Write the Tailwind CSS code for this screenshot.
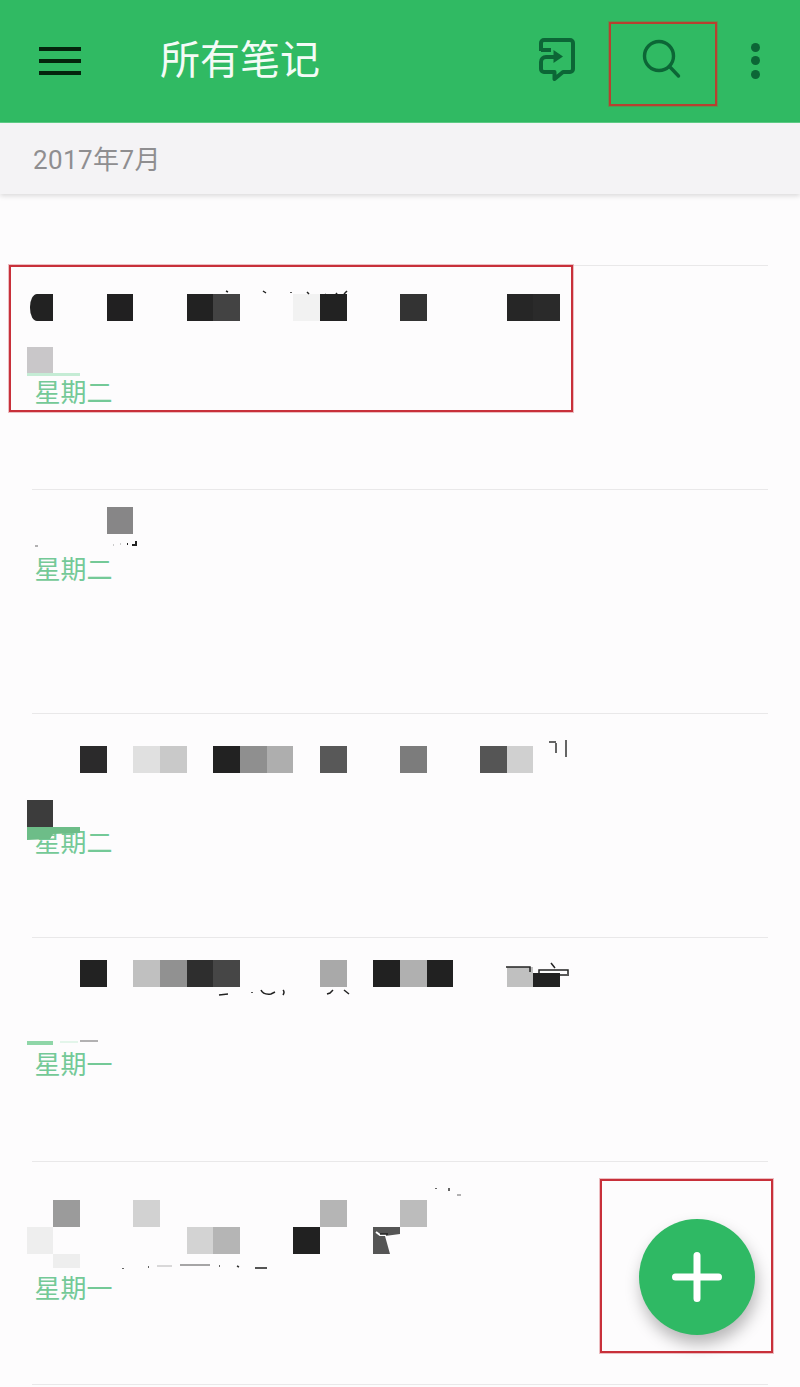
<!DOCTYPE html>
<html lang="zh-CN">
<head>
  <meta charset="UTF-8">
  <meta name="viewport" content="width=device-width, initial-scale=1.0">
  <title>所有笔记</title>
  <script src="https://cdn.jsdelivr.net/npm/@tailwindcss/browser@4"></script>
</head>
<body class="bg-[#fdfcfd] font-['Roboto','Noto_Sans_CJK_SC',sans-serif]">
  <div class="relative w-[800px] h-[1387px] overflow-hidden">

    <!-- Toolbar -->
    <header class="flex items-center h-[123px] bg-[#30ba63] border-b border-[#5fcf88]">
      <div class="flex flex-col gap-[8px] ml-[39px] w-[42px]">
        <span class="h-[4px] bg-[#04250d]"></span>
        <span class="h-[4px] bg-[#04250d]"></span>
        <span class="h-[4px] bg-[#04250d]"></span>
      </div>
      <h1 class="ml-[79px] mt-[-8px] text-[40px] leading-none text-[#f4fbf6] font-normal font-['Noto_Sans_CJK_SC',sans-serif]">所有笔记</h1>
      <svg class="ml-[219px] mt-[-4px] w-[36px] h-[43px]" viewBox="0 0 36 43" fill="none" stroke="#0c6636" stroke-width="4">
        <path d="M2 13V5a3 3 0 0 1 3-3h26a3 3 0 0 1 3 3v26a3 3 0 0 1-3 3h-7l-8.500 7v-7H5a3 3 0 0 1-3-3v-7a5 5 0 0 1 5-5h8" stroke-linejoin="round"/>
        <path d="M2 12h10"/>
        <path d="M14.500 12l9.500 6.500-9.500 6.500z" fill="#0c6636" stroke="none"/>
      </svg>
      <svg class="ml-[67px] mt-[-4px] w-[40px] h-[40px]" viewBox="0 0 40 40" fill="none" stroke="#0c6636" stroke-width="3.400" stroke-linecap="round">
        <circle cx="17" cy="17" r="14.500"/>
        <path d="M27.500 27.500l9 9.500"/>
      </svg>
      <div class="flex flex-col gap-[4.500px] ml-[69px] mt-[-1px]">
        <span class="w-[9px] h-[9px] rounded-full bg-[#0c6636]"></span>
        <span class="w-[9px] h-[9px] rounded-full bg-[#0c6636]"></span>
        <span class="w-[9px] h-[9px] rounded-full bg-[#0c6636]"></span>
      </div>
    </header>

    <!-- Month header -->
    <div class="flex items-center h-[71px] pl-[33px] pt-[3px] bg-[#f4f3f5] text-[26px] tracking-[0.4px] text-[#8f8e90] shadow-[0_2px_5px_rgba(0,0,0,0.14)]">2017年7月</div>

    <!-- Notes -->
    <ul class="mt-[71px] mx-[32px]">
      <li class="relative h-[224px] border-t border-[#e9e8e9] pt-[28px]">
        <div class="grid grid-cols-[repeat(21,26.667px)] auto-rows-[27px] gap-y-[26px] -ml-[5.200px]">
          <span class="row-start-1 col-start-1 ml-[3px] bg-[#222] rounded-l-[7px_13px]"></span>
          <span class="row-start-1 col-start-4 bg-[#212021]"></span>
          <span class="row-start-1 col-start-7 bg-[#222]"></span>
          <span class="row-start-1 col-start-8 bg-[#434343]"></span>
          <span class="row-start-1 col-start-11 bg-[#f2f2f2]"></span>
          <span class="row-start-1 col-start-12 bg-[#222]"></span>
          <span class="row-start-1 col-start-15 bg-[#333]"></span>
          <span class="row-start-1 col-start-19 bg-[#262626]"></span>
          <span class="row-start-1 col-start-20 bg-[#2a2a2a]"></span>
          <span class="row-start-2 col-start-1 bg-[#c9c7c9]"></span>
        </div>
        <p class="mt-[6px] ml-[2.500px] text-[26px] leading-[26px] text-[#74c997]">星期二</p>
        <svg class="absolute left-[-32px] top-[-1px] w-[800px] h-[224px]" viewBox="0 0 800 224" fill="none" stroke="#222" stroke-width="1.500">
          <path d="M226 26l2 1M263 26l3 2M291 27v1M307 27l2 2M325 29l3 3M336 28l3 4M347 26l-3 3"/>
          <path d="M27 108h26v3H27zM53 108h27v3H53z" fill="#c5ecd5" stroke="none"/>
        </svg>
      </li>

      <li class="relative h-[224px] border-t border-[#e9e8e9] pt-[17px]">
        <div class="grid grid-cols-[repeat(21,26.667px)] auto-rows-[27px] -ml-[5.200px]">
          <span class="col-start-4 bg-[#878687]"></span>
        </div>
        <p class="mt-[23px] ml-[2.500px] text-[26px] leading-[26px] text-[#74c997]">星期二</p>
        <svg class="absolute left-[-32px] top-[-1px] w-[800px] h-[224px]" viewBox="0 0 800 224" fill="none" stroke="#222" stroke-width="1.500">
          <path d="M35 57h3" stroke="#999"/>
          <path d="M113 56h1M120 55h1" stroke="#bbb"/>
          <path d="M127 55h1M136 52v4h-4" stroke-width="2"/>
        </svg>
      </li>

      <li class="relative h-[224px] border-t border-[#e9e8e9] pt-[32px]">
        <div class="grid grid-cols-[repeat(21,26.667px)] auto-rows-[27px] gap-y-[27px] -ml-[5.200px]">
          <span class="row-start-1 col-start-3 bg-[#2b2a2b]"></span>
          <span class="row-start-1 col-start-5 bg-[#e0e0e0]"></span>
          <span class="row-start-1 col-start-6 bg-[#c9c9c9]"></span>
          <span class="row-start-1 col-start-8 bg-[#222]"></span>
          <span class="row-start-1 col-start-9 bg-[#8f8f8f]"></span>
          <span class="row-start-1 col-start-10 bg-[#aeaeae]"></span>
          <span class="row-start-1 col-start-12 bg-[#585858]"></span>
          <span class="row-start-1 col-start-15 bg-[#7c7c7c]"></span>
          <span class="row-start-1 col-start-18 bg-[#555]"></span>
          <span class="row-start-1 col-start-19 bg-[#d0d0d0]"></span>
          <span class="row-start-2 col-start-1 bg-[#3c3c3c]"></span>
        </div>
        <p class="mt-[3px] ml-[2.500px] text-[26px] leading-[26px] text-[#74c997]">星期二</p>
        <svg class="absolute left-[-32px] top-[-1px] w-[800px] h-[224px]" viewBox="0 0 800 224" fill="none" stroke="#333" stroke-width="1.500">
          <path d="M549 29h7M556 30v10M566 27v17"/>
          <path d="M27 114h53v6l-27 1-3 5-23 1z" fill="#6dbd88" stroke="none"/>
        </svg>
      </li>

      <li class="relative h-[224px] border-t border-[#e9e8e9] pt-[22px]">
        <div class="grid grid-cols-[repeat(21,26.667px)] auto-rows-[27px] -ml-[5.200px]">
          <span class="col-start-3 bg-[#222]"></span>
          <span class="col-start-5 bg-[#c0c0c0]"></span>
          <span class="col-start-6 bg-[#919191]"></span>
          <span class="col-start-7 bg-[#2e2e2e]"></span>
          <span class="col-start-8 bg-[#464646]"></span>
          <span class="col-start-12 bg-[#a9a9a9]"></span>
          <span class="col-start-14 bg-[#212121]"></span>
          <span class="col-start-15 bg-[#b0b0b0]"></span>
          <span class="col-start-16 bg-[#212121]"></span>
          <span class="col-start-19 mt-[7px] bg-[#c0c0c0]"></span>
          <span class="col-start-20 mt-[13px] bg-[#222]"></span>
        </div>
        <p class="mt-[65px] ml-[2.500px] text-[26px] leading-[26px] text-[#74c997]">星期一</p>
        <svg class="absolute left-[-32px] top-[-1px] w-[800px] h-[224px]" viewBox="0 0 800 224" fill="none" stroke="#222" stroke-width="1.500">
          <path d="M219 58l9-1M252 55v1M261 53q2 5 10 4l4-2M283 53q2 2 0 5M327 57l3-1 3-3M344 53l5 4"/>
          <path d="M506 30h24v5M539 39v-6h29v6M540 38h27M551 26l4 5"/>
          <path d="M27 104h26v4H27z" fill="#8fd6a8" stroke="none"/>
          <path d="M60 104h18v2H60z" fill="#e3f5ea" stroke="none"/>
          <path d="M80 104h18" stroke="#999"/>
        </svg>
      </li>

      <li class="relative h-[224px] border-t border-[#e9e8e9] border-b pt-[38px]">
        <div class="grid grid-cols-[repeat(21,26.667px)] grid-rows-[27px_27px_14px] -ml-[5.200px]">
          <span class="row-start-1 col-start-2 bg-[#9b9b9b]"></span>
          <span class="row-start-1 col-start-5 bg-[#d2d2d2]"></span>
          <span class="row-start-1 col-start-12 bg-[#b5b5b5]"></span>
          <span class="row-start-1 col-start-15 bg-[#bcbcbc]"></span>
          <span class="row-start-2 col-start-1 bg-[#eeeeee]"></span>
          <span class="row-start-2 col-start-7 bg-[#d3d3d3]"></span>
          <span class="row-start-2 col-start-8 bg-[#b5b5b5]"></span>
          <span class="row-start-2 col-start-11 bg-[#212121]"></span>
          <span class="row-start-3 col-start-2 bg-[#eeeeee]"></span>
        </div>
        <p class="mt-[8px] ml-[2.500px] text-[26px] leading-[26px] text-[#74c997]">星期一</p>
        <svg class="absolute left-[-32px] top-[-1px] w-[800px] h-[224px]" viewBox="0 0 800 224" fill="none" stroke="#333" stroke-width="1.500">
          <path d="M373 66h27v7l-15 2 5 18h-17z" fill="#555" stroke="none"/>
          <path d="M376 71l4 3h6" stroke="#fff" stroke-width="2"/>
          <path d="M380 73h8" stroke="#222"/>
          <path d="M123 107v1M148 106h1M219 105h1M237 105l2 1M436 27v1M449 27v3"/>
          <path d="M157 105h15" stroke="#ccc"/>
          <path d="M180 104h30" stroke="#888"/>
          <path d="M255 107h12" stroke="#555" stroke-width="2"/>
          <path d="M457 34h4" stroke="#999"/>
        </svg>
      </li>
    </ul>

    <!-- Add note button -->
    <button class="absolute left-[639px] top-[1219px] flex items-center justify-center w-[116px] h-[116px] rounded-full bg-[#2fb964] shadow-[2px_9px_16px_rgba(0,0,0,0.28)]">
      <svg class="w-[50px] h-[50px]" viewBox="0 0 50 50" stroke="#fff" stroke-width="7" stroke-linecap="round">
        <path d="M3.500 25h43M25 3.500v43"/>
      </svg>
    </button>

    <!-- Annotation boxes -->
    <div class="absolute left-[609px] top-[22px] w-[108px] h-[84px] border-2 border-[#b8402f] outline outline-1 outline-[#b8402f]/30"></div>
    <div class="absolute left-[9px] top-[265px] w-[564px] h-[147px] border-2 border-[#c8303a] outline outline-1 outline-[#c8303a]/30"></div>
    <div class="absolute left-[600px] top-[1179px] w-[173px] h-[174px] border-2 border-[#c8303a] outline outline-1 outline-[#c8303a]/30"></div>
  </div>
</body>
</html>
